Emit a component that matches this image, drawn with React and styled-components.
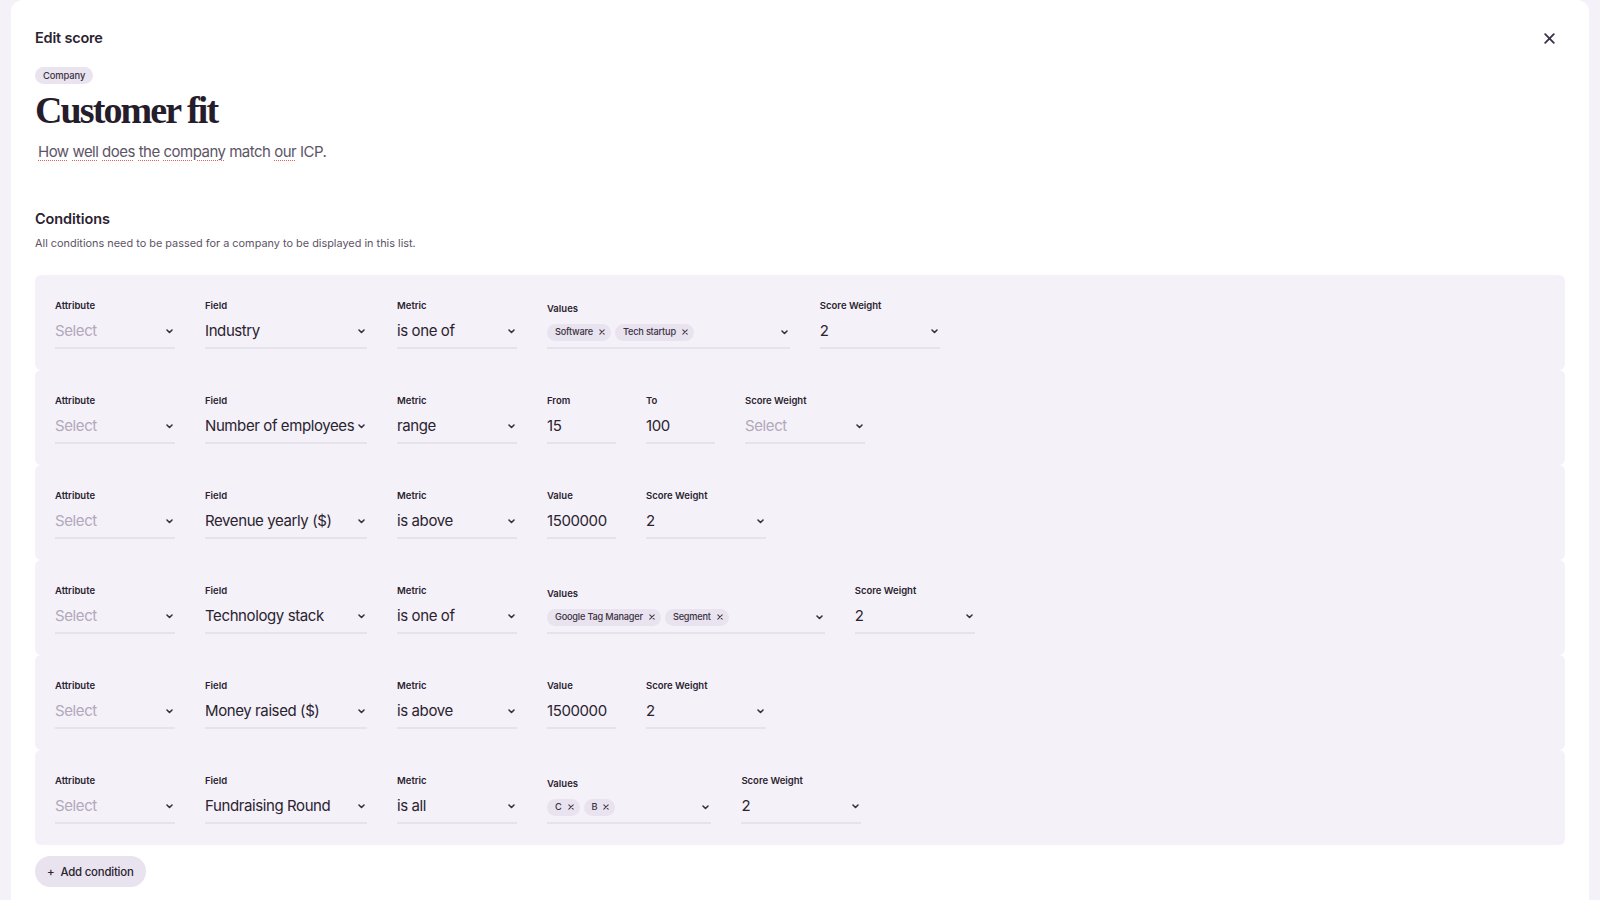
import React from "react";
import styled, { createGlobalStyle } from "styled-components";

const GlobalStyle = createGlobalStyle`
  * { box-sizing: border-box; }
  html, body { margin: 0; padding: 0; }
  body {
    background: #f4f2f8;
    font-family: Inter, "Noto Sans", sans-serif;
    color: #2b2330;
    -webkit-font-smoothing: antialiased;
  }
`;

const Panel = styled.div`
  margin: 0 11px;
  min-height: 900px;
  background: #ffffff;
  border-radius: 12px 12px 0 0;
  padding: 26px 24px 40px 24px;
`;

const Header = styled.div`
  display: flex;
  align-items: center;
  justify-content: space-between;
  height: 24px;
`;

const HeaderTitle = styled.div`
  font-size: 14.5px;
  font-weight: 600;
  line-height: 24px;
  letter-spacing: -0.2px;
  color: #2b2330;
`;

const CloseButton = styled.button`
  width: 24px;
  height: 24px;
  margin-right: 4px;
  border: 0;
  background: transparent;
  padding: 0;
  display: flex;
  align-items: center;
  justify-content: center;
  cursor: pointer;
  color: #3a3045;
`;

const Badge = styled.span`
  display: inline-block;
  margin-top: 17px;
  height: 17px;
  line-height: 17px;
  padding: 0 8px;
  border-radius: 9px;
  background: #e9e4ef;
  font-size: 9.4px;
  font-weight: 500;
  letter-spacing: -0.1px;
  color: #3b3242;
`;

const Title = styled.h1`
  margin: 7px 0 0 0;
  font-family: "Liberation Serif", "Times New Roman", serif;
  font-weight: 700;
  font-size: 38px;
  line-height: 38px;
  letter-spacing: -1.9px;
  color: #251d2b;
`;

const Description = styled.div`
  margin-top: 13px;
  padding-left: 3px;
  font-size: 15px;
  line-height: 20px;
  letter-spacing: -0.5px;
  color: #5d5466;
`;

const Misspelled = styled.span`
  text-decoration: underline dotted rgba(226, 80, 80, 0.9);
  text-decoration-thickness: 1px;
  text-underline-offset: 3px;
`;

const SectionTitle = styled.h2`
  margin: 47px 0 0 0;
  font-size: 14.5px;
  font-weight: 600;
  line-height: 20px;
  letter-spacing: -0.1px;
  color: #2b2330;
`;

const SectionHint = styled.p`
  margin: 7px 0 0 0;
  font-size: 10.9px;
  line-height: 14px;
  color: #5d5466;
`;

const Rows = styled.div`
  margin-top: 25px;
  display: flex;
  flex-direction: column;
`;

const Row = styled.div`
  display: flex;
  align-items: flex-end;
  gap: 30px;
  padding: 25px 20px 21px 20px;
  background: #f4f1f8;
  border-radius: 6px;
`;

const Field = styled.div`
  display: flex;
  flex-direction: column;
  width: ${(p) => (p.$w ? `${p.$w}px` : "auto")};
`;

const Label = styled.div`
  font-size: 9.5px;
  font-weight: 600;
  line-height: 12px;
  margin-bottom: 9px;
  color: #2b2330;
`;

const Control = styled.div`
  display: flex;
  align-items: center;
  height: ${(p) => (p.$chips ? "25px" : "28px")};
  padding: 0 2px ${(p) => (p.$chips ? "7px" : "6px")} 0;
  border-bottom: 2px solid #e7e2ec;
  font-size: 15px;
  line-height: 20px;
  letter-spacing: -0.4px;
  color: ${(p) => (p.$placeholder ? "#b2a8bb" : "#2b2330")};
  white-space: nowrap;
`;

const ControlText = styled.span`
  flex: 1;
`;

const ChipList = styled.div`
  display: flex;
  align-items: center;
  gap: 4px;
  margin-right: 87px;
`;

const Chip = styled.span`
  display: inline-flex;
  align-items: center;
  gap: 6px;
  height: 17px;
  padding: 0 6px 0 8px;
  border-radius: 9px;
  background: #e8e3ee;
  font-size: 9.2px;
  font-weight: 500;
  letter-spacing: -0.2px;
  color: #3b3242;
`;

const AddButton = styled.button`
  margin-top: 11px;
  height: 31px;
  display: inline-flex;
  align-items: center;
  gap: 6px;
  padding: 0 12px 0 12px;
  border: 0;
  border-radius: 16px;
  background: #e8e3ee;
  font-family: Inter, "Noto Sans", sans-serif;
  font-size: 11.4px;
  font-weight: 500;
  letter-spacing: -0.2px;
  color: #2b2330;
  cursor: pointer;
`;

const Chevron = () => (
  <svg width="7" height="5" viewBox="0 0 7 5" fill="none">
    <path d="M1 1l2.5 2.5L6 1" stroke="#3a3045" strokeWidth="1.6" strokeLinecap="round" strokeLinejoin="round" />
  </svg>
);

const SmallX = () => (
  <svg width="6" height="6" viewBox="0 0 6 6" fill="none">
    <path d="M0.8 0.8l4.4 4.4M5.2 0.8L0.8 5.2" stroke="#4a4050" strokeWidth="1.1" strokeLinecap="round" />
  </svg>
);

const CloseIcon = () => (
  <svg width="11" height="11" viewBox="0 0 11 11" fill="none">
    <path d="M1.2 1.2l8.6 8.6M9.8 1.2l-8.6 8.6" stroke="#3a3045" strokeWidth="1.8" strokeLinecap="round" />
  </svg>
);

const SelectField = ({ label, value, w }) => (
  <Field $w={w}>
    <Label>{label}</Label>
    <Control $placeholder={!value}>
      <ControlText>{value || "Select"}</ControlText>
      <Chevron />
    </Control>
  </Field>
);

const InputField = ({ label, value, w }) => (
  <Field $w={w}>
    <Label>{label}</Label>
    <Control>
      <ControlText>{value}</ControlText>
    </Control>
  </Field>
);

const ChipsField = ({ label, values }) => (
  <Field>
    <Label>{label}</Label>
    <Control $chips>
      <ChipList>
        {values.map((v) => (
          <Chip key={v}>
            {v}
            <SmallX />
          </Chip>
        ))}
      </ChipList>
      <Chevron />
    </Control>
  </Field>
);

const rows = [
  {
    field: "Industry",
    metric: "is one of",
    rest: [{ type: "chips", label: "Values", values: ["Software", "Tech startup"] }],
    weight: "2",
  },
  {
    field: "Number of employees",
    metric: "range",
    rest: [
      { type: "input", label: "From", value: "15" },
      { type: "input", label: "To", value: "100" },
    ],
    weight: "",
  },
  {
    field: "Revenue yearly ($)",
    metric: "is above",
    rest: [{ type: "input", label: "Value", value: "1500000" }],
    weight: "2",
  },
  {
    field: "Technology stack",
    metric: "is one of",
    rest: [{ type: "chips", label: "Values", values: ["Google Tag Manager", "Segment"] }],
    weight: "2",
  },
  {
    field: "Money raised ($)",
    metric: "is above",
    rest: [{ type: "input", label: "Value", value: "1500000" }],
    weight: "2",
  },
  {
    field: "Fundraising Round",
    metric: "is all",
    rest: [{ type: "chips", label: "Values", values: ["C", "B"] }],
    weight: "2",
  },
];

export default function App() {
  return (
    <>
      <GlobalStyle />
      <Panel>
        <Header>
          <HeaderTitle>Edit score</HeaderTitle>
          <CloseButton aria-label="Close">
            <CloseIcon />
          </CloseButton>
        </Header>
        <Badge>Company</Badge>
        <Title>Customer fit</Title>
        <Description>
          <Misspelled>How</Misspelled> <Misspelled>well</Misspelled> <Misspelled>does</Misspelled>{" "}
          <Misspelled>the</Misspelled> <Misspelled>company</Misspelled> match <Misspelled>our</Misspelled> ICP.
        </Description>

        <SectionTitle>Conditions</SectionTitle>
        <SectionHint>All conditions need to be passed for a company to be displayed in this list.</SectionHint>

        <Rows>
          {rows.map((r, i) => (
            <Row key={i}>
              <SelectField label="Attribute" value="" w={120} />
              <SelectField label="Field" value={r.field} w={162} />
              <SelectField label="Metric" value={r.metric} w={120} />
              {r.rest.map((f) =>
                f.type === "chips" ? (
                  <ChipsField key={f.label} label={f.label} values={f.values} />
                ) : (
                  <InputField key={f.label} label={f.label} value={f.value} w={69} />
                )
              )}
              <SelectField label="Score Weight" value={r.weight} w={120} />
            </Row>
          ))}
        </Rows>

        <AddButton>
          <span>+</span>
          <span>Add condition</span>
        </AddButton>
      </Panel>
    </>
  );
}
